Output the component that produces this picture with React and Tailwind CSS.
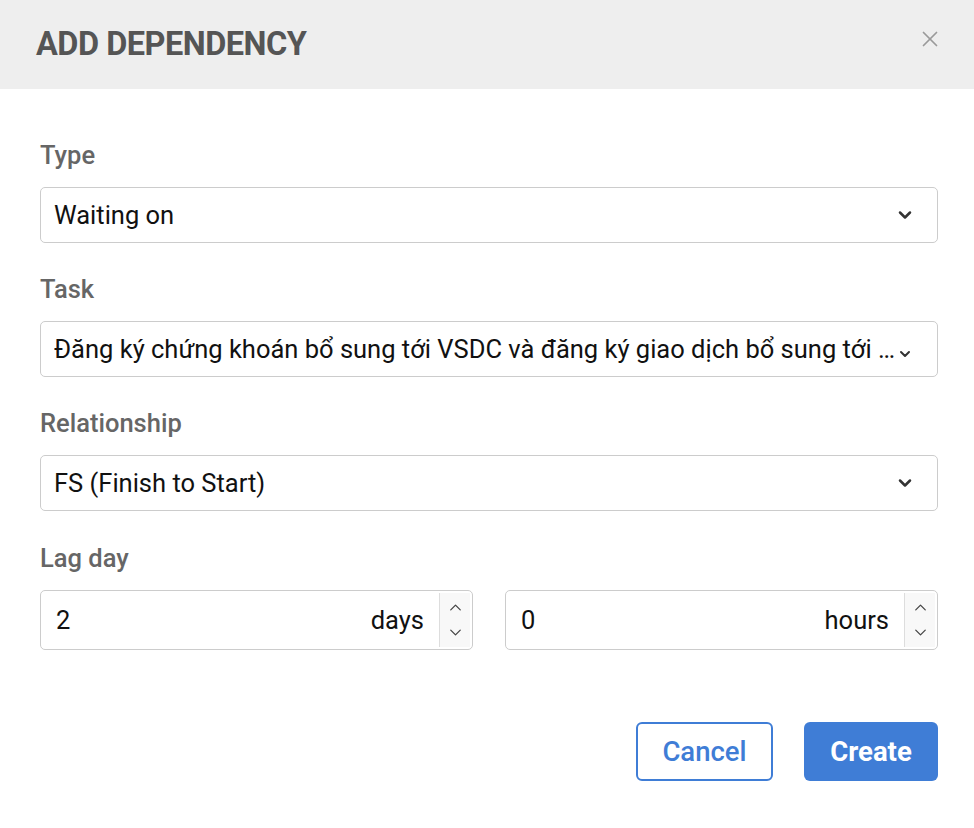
import { ChevronDown, ChevronUp, X } from 'lucide-react';

const Label = ({ children }) => (
  <div className="text-[25.5px] leading-[26px] font-medium text-[#666666] mb-[19px]">{children}</div>
);

const Select = ({ value, overlap }) => (
  <div className="relative h-[56px] border border-[#cccccc] rounded-[5px] flex items-center pl-[13px] text-[25.5px] text-[#111111]">
    {overlap ? (
      <>
        <span className="flex-1 truncate pr-[40px]">{value}</span>
        <ChevronDown className="absolute right-[24px] top-[24px] w-[16px] h-[16px] text-[#333333]" strokeWidth={3} />
      </>
    ) : (
      <>
        <span className="flex-1 truncate">{value}</span>
        <ChevronDown className="w-[20px] h-[20px] text-[#333333] ml-1 mr-[22px] shrink-0" strokeWidth={3} />
      </>
    )}
  </div>
);

const NumberInput = ({ value, unit }) => (
  <div className="flex-1 h-[60px] border border-[#cccccc] rounded-[5px] flex items-center text-[25.5px] text-[#111111]">
    <span className="flex-1 pl-[15px]">{value}</span>
    <span className="pr-[15px]">{unit}</span>
    <div className="h-[54px] w-[31px] border-l border-[#dddddd] bg-[#f8f8f8] flex flex-col items-center justify-center text-[#444444] mr-[2px]">
      <ChevronUp className="w-[19px] h-[19px]" strokeWidth={1.6} />
      <ChevronDown className="w-[19px] h-[19px] mt-[6px]" strokeWidth={1.6} />
    </div>
  </div>
);

export default function App() {
  return (
    <div className="w-[974px] h-[828px] bg-white" style={{ fontFamily: 'Roboto, "Noto Sans", sans-serif' }}>
      {/* Header */}
      <div className="h-[89px] bg-[#eeeeee] flex items-center justify-between pl-[36px] pr-[31px]">
        <h2 className="text-[32.5px] font-bold text-[#555555] tracking-[-0.5px]">ADD DEPENDENCY</h2>
        <X className="w-[26px] h-[26px] text-[#9a9a9a] mt-[-12px]" strokeWidth={1.6} />
      </div>

      {/* Body */}
      <div className="pl-[40px] pr-[36px] pt-[53px]">
        <Label>Type</Label>
        <Select value="Waiting on" />

        <div className="mt-[33px]">
          <Label>Task</Label>
          <Select overlap value="Đăng ký chứng khoán bổ sung tới VSDC và đăng ký giao dịch bổ sung tới HNX" />
        </div>

        <div className="mt-[33px]">
          <Label>Relationship</Label>
          <Select value="FS (Finish to Start)" />
        </div>

        <div className="mt-[34px]">
          <Label>Lag day</Label>
          <div className="flex gap-[32px]">
            <NumberInput value="2" unit="days" />
            <NumberInput value="0" unit="hours" />
          </div>
        </div>

        {/* Footer */}
        <div className="flex justify-end gap-[31px] mt-[72px]">
          <button className="w-[137px] h-[59px] border-2 border-[#3f7dd6] rounded-[6px] text-[#3f7dd6] text-[27.5px] font-medium">
            Cancel
          </button>
          <button className="w-[134px] h-[59px] bg-[#3f7dd6] rounded-[6px] text-white text-[27.5px] font-bold">
            Create
          </button>
        </div>
      </div>
    </div>
  );
}
